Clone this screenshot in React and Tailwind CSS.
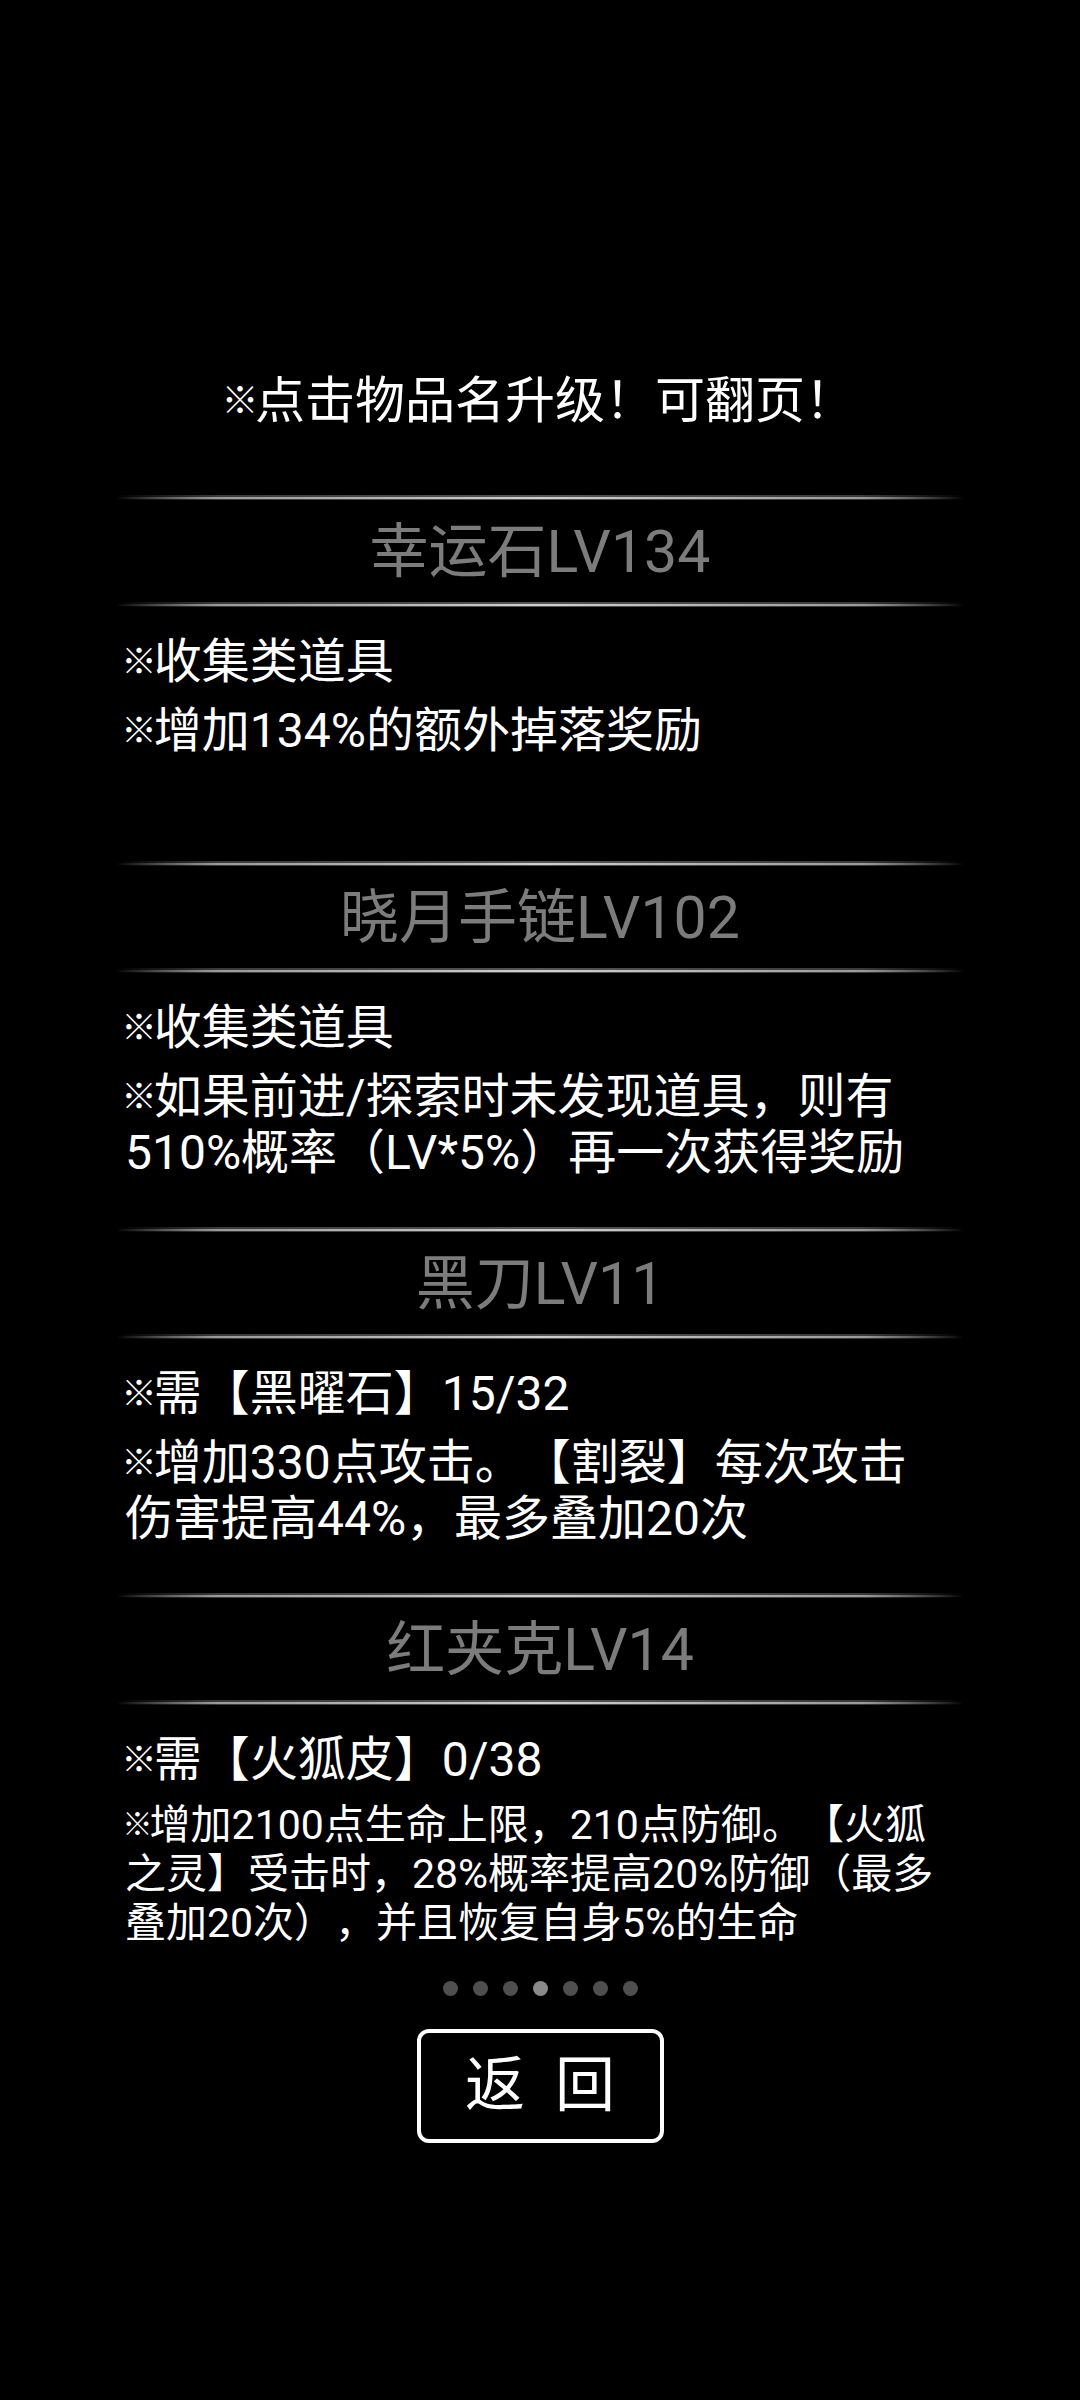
import React from "react";

const items = [
  {
    name: "幸运石LV134",
    paras: [
      { lines: ["※收集类道具"] },
      { lines: ["※增加134%的额外掉落奖励"] },
    ],
  },
  {
    name: "晓月手链LV102",
    paras: [
      { lines: ["※收集类道具"] },
      { lines: ["※如果前进/探索时未发现道具，则有", "510%概率（LV*5%）再一次获得奖励"] },
    ],
  },
  {
    name: "黑刀LV11",
    paras: [
      { lines: ["※需【黑曜石】15/32"] },
      { lines: ["※增加330点攻击。【割裂】每次攻击", "伤害提高44%，最多叠加20次"] },
    ],
  },
  {
    name: "红夹克LV14",
    paras: [
      { lines: ["※需【火狐皮】0/38"] },
      {
        small: true,
        lines: [
          "※增加2100点生命上限，210点防御。【火狐",
          "之灵】受击时，28%概率提高20%防御（最多",
          "叠加20次），并且恢复自身5%的生命",
        ],
      },
    ],
  },
];

function Mark() {
  return (
    <span className="inline-flex w-[0.6em] justify-center">
      <span className="inline-block scale-[0.74]">※</span>
    </span>
  );
}

function Txt({ s }) {
  if (s.startsWith("※")) {
    return (
      <>
        <Mark />
        {s.slice(1)}
      </>
    );
  }
  return <>{s}</>;
}

function Line() {
  return (
    <div className="flex h-[5px] w-full items-center bg-[linear-gradient(to_right,transparent,#3a3a3a_12%,#555555_50%,#3a3a3a_88%,transparent)]">
      <div className="h-[2px] w-full bg-[linear-gradient(to_right,transparent,#9a9a9a_12%,#d0d0d0_50%,#9a9a9a_88%,transparent)]" />
    </div>
  );
}

export default function App() {
  const dots = [0, 1, 2, 3, 4, 5, 6];
  return (
    <div className="min-h-[2400px] w-full bg-black text-white font-['Roboto','Noto_Sans_CJK_SC',sans-serif] [text-spacing-trim:space-all]">
      <div className="pt-[373px] text-center text-[50px] leading-[56px] whitespace-nowrap">
        <Txt s="※点击物品名升级！可翻页！" />
      </div>
      <div className="mx-auto mt-[66px] w-[848px]">
        {items.map((item) => (
          <div key={item.name} className="h-[366px]">
            <Line />
            <div className="flex h-[102px] items-center justify-center text-[59px] leading-none text-[#7c7c7c]">
              {item.name}
            </div>
            <Line />
            <div className="flex flex-col gap-[13px] pl-[9px] pt-[27px]">
              {item.paras.map((p, i) => (
                <div
                  key={i}
                  className={
                    p.small
                      ? "whitespace-nowrap text-[41px] leading-[49px]"
                      : "whitespace-nowrap text-[48px] leading-[56px]"
                  }
                >
                  {p.lines.map((l, j) => (
                    <div key={j}>
                      <Txt s={l} />
                    </div>
                  ))}
                </div>
              ))}
            </div>
          </div>
        ))}
      </div>
      <div className="mt-[22px] flex justify-center gap-[15px]">
        {dots.map((d) => (
          <div
            key={d}
            className={
              d === 3
                ? "h-[15px] w-[15px] rounded-full bg-[#8a8a8a]"
                : "h-[15px] w-[15px] rounded-full bg-[#4f4f4f]"
            }
          />
        ))}
      </div>
      <div className="mx-auto mt-[33px] flex h-[114px] w-[247px] items-center justify-center gap-[30px] rounded-[12px] border-4 border-white text-[60px] leading-none">
        <span>返</span>
        <span>回</span>
      </div>
    </div>
  );
}
